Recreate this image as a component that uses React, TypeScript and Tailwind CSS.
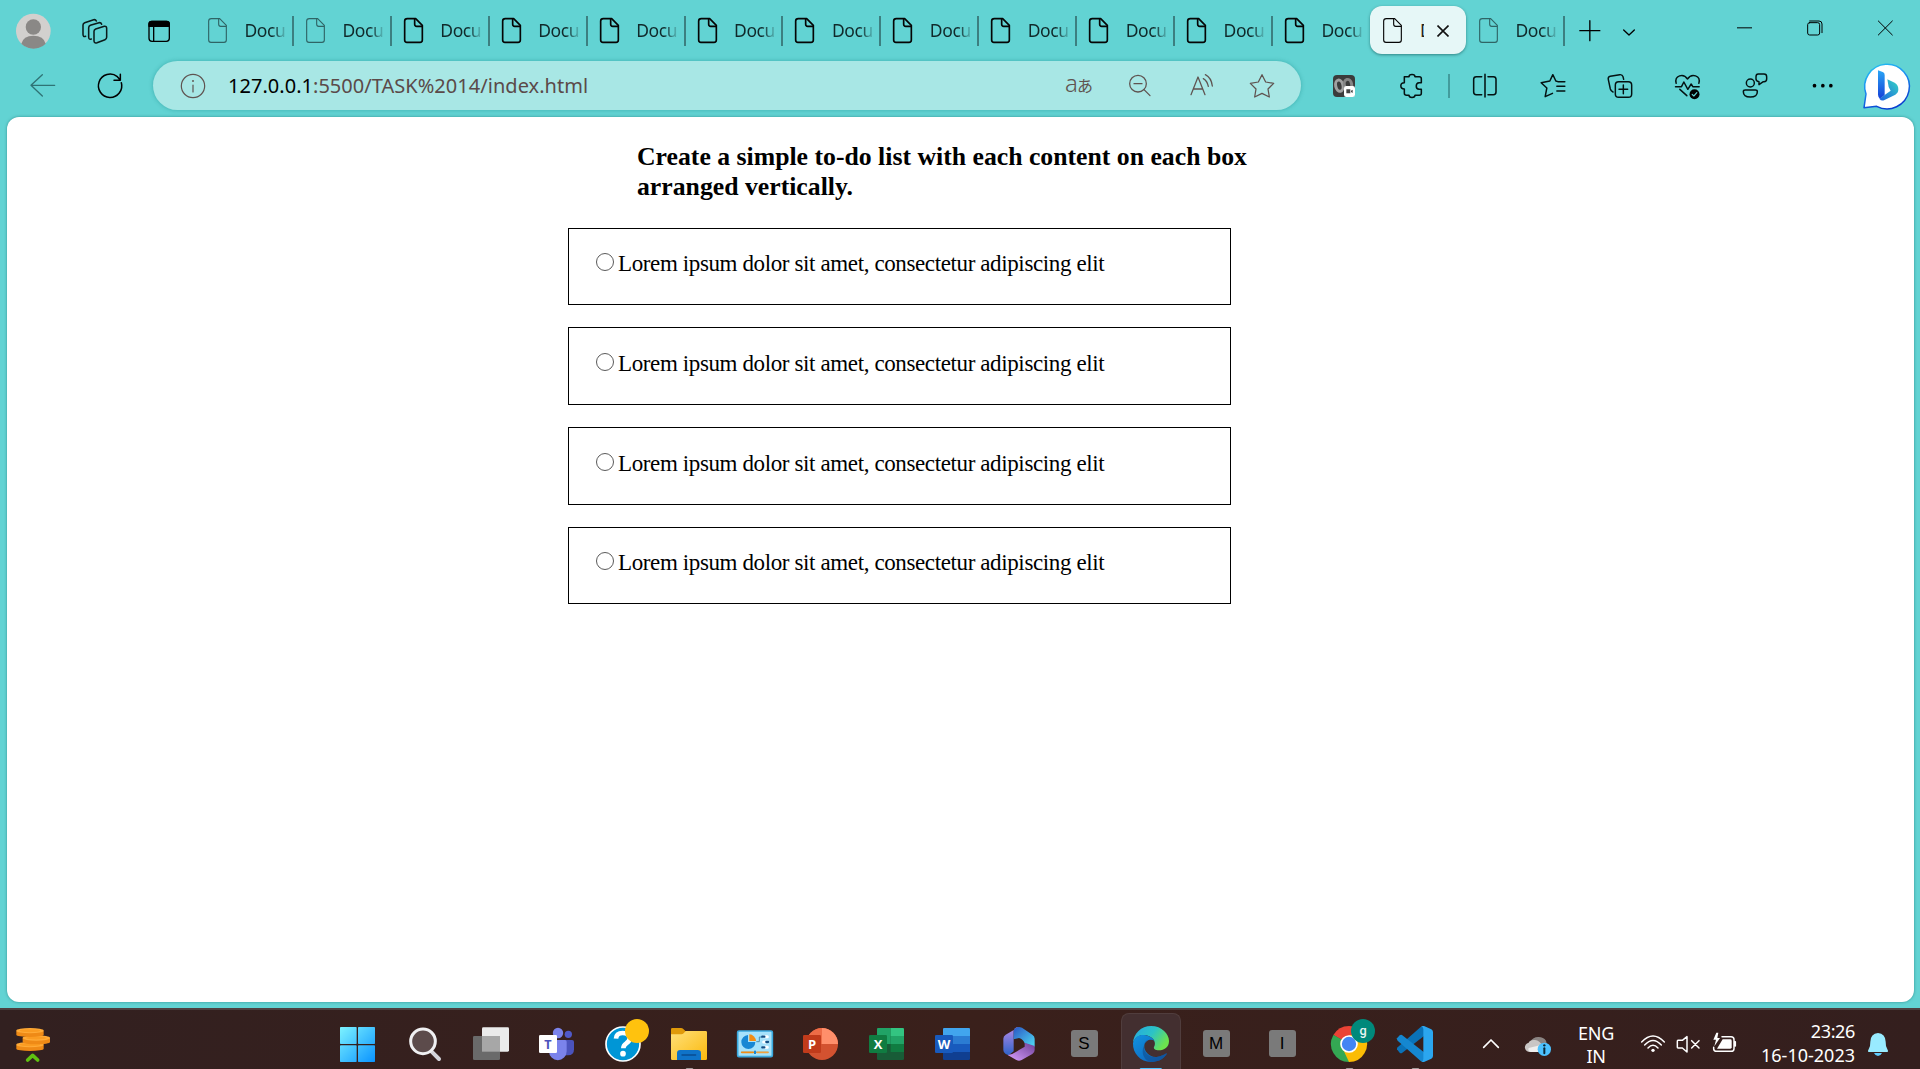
import React from "react";

const UI_FONT = "font-['Noto_Sans','Open_Sans',sans-serif]";

type ArtProps = {
  cx: number;
  cy: number;
  size?: number;
  stroke?: string;
  sw?: number;
  children: React.ReactNode;
};

/** Square drawing area with three user units per pixel, centred on (cx, cy). */
function Art({ cx, cy, size = 50, stroke = "none", sw = 4, children }: ArtProps) {
  const half = (size * 3) / 2;
  return (
    <svg
      width={size}
      height={size}
      viewBox={`${cx - half} ${cy - half} ${size * 3} ${size * 3}`}
      fill="none"
      stroke={stroke}
      strokeWidth={sw}
      strokeLinecap="round"
      strokeLinejoin="round"
      className="block shrink-0 overflow-visible"
    >
      {children}
    </svg>
  );
}

function Slot({ w, children }: { w: string; children?: React.ReactNode }) {
  return <div className={`flex h-full shrink-0 items-center justify-center ${w}`}>{children}</div>;
}

function PageIcon({ dim, thin }: { dim?: boolean; thin?: boolean }) {
  return (
    <svg width="19" height="25" viewBox="0 0 57 75" fill="none" stroke={dim ? "#2f6465" : "#050505"} strokeWidth={dim || thin ? 3.4 : 5} strokeLinejoin="round" className="block shrink-0 overflow-visible">
      <path d="M10 2H35L55 22V66Q55 73 48 73H9Q2 73 2 66V9Q2 2 10 2Z" />
      <path d="M32 2V19Q32 25 38 25H55" />
    </svg>
  );
}

function Tab({ dim, divider }: { dim?: boolean; divider: boolean }) {
  return (
    <div className="relative flex h-full w-[97.92px] shrink-0 items-center pl-3">
      <PageIcon dim={dim} />
      <span className="-mt-px ml-[17.5px] h-[28px] w-[43px] overflow-hidden whitespace-nowrap bg-gradient-to-r from-[#10292a] from-65% to-[#62d3d3] to-100% bg-clip-text text-[17.5px] leading-[28px] tracking-[-0.4px] text-transparent">
        Docu
      </span>
      {divider && <span className="ml-[4.5px] h-[30px] w-[2px] shrink-0 bg-[#3c7f80]" />}
    </div>
  );
}

function TabStrip() {
  return (
    <div className="flex h-[61px] w-full items-center">
      <Slot w="w-16">
        <Art cx={96} cy={91}>
          <circle cx="100" cy="91" r="52" fill="#d2d0ce" />
          <circle cx="100" cy="79" r="23" fill="#8a8886" />
          <path d="M64 129Q70 105 100 105Q131 105 137 129A52 52 0 0 1 64 129Z" fill="#8a8886" />
        </Art>
      </Slot>
      <Slot w="w-16">
        <Art cx={288} cy={91} stroke="#0b1b1b" sw={4.6}>
          <path d="M287 85L313 77Q320 76 320 83V110Q320 115 315 117L291 126Q282 129 282 120V92Q282 87 287 85Z" />
          <path d="M274 115Q266 118 266 109V81Q266 76 271 74L297 66Q303 65 305 71" />
          <path d="M257 107Q249 110 249 101V73Q249 68 254 66L281 57Q287 56 289 61" />
        </Art>
      </Slot>
      <Slot w="w-[68px]">
        <Art cx={486} cy={91} stroke="#000" sw={4}>
          <rect x="447" y="62" width="61" height="60" rx="9" />
          <path d="M447 77V70Q447 62 455 62H500Q508 62 508 70V77Z" fill="#000" />
          <path d="M461 77V121" />
        </Art>
      </Slot>
      {Array.from({ length: 12 }, (_, i) => (
        <Tab key={i} dim={i < 2} divider={i < 11} />
      ))}
      <div className="-ml-px mr-px mt-[-1px] flex h-12 w-24 shrink-0 items-center rounded-xl bg-[#e6f7f7] pl-[13px] pt-px shadow-[0_1px_3px_rgba(0,60,60,0.5)]">
        <PageIcon thin />
        <span className="-mt-px ml-[18px] w-[4px] overflow-hidden text-[17.5px] leading-7 text-[#222]">D</span>
        <span className="ml-[13px] mt-px flex">
          <svg width="12" height="12" viewBox="0 0 12 12" stroke="#111" strokeWidth="1.6">
            <path d="M0.5 0.5L11.5 11.5M11.5 0.5L0.5 11.5" />
          </svg>
        </span>
      </div>
      <Tab dim divider />
      <Slot w="w-[46px]">
        <Art cx={445.5} cy={91} stroke="#000">
          <path d="M421 90H481M451 60V120" />
        </Art>
      </Slot>
      <Slot w="w-[32px]">
        <Art cx={563} cy={91} size={30} stroke="#000">
          <path d="M553 88L569 103L585 88" />
        </Art>
      </Slot>
      <div className="ml-auto flex h-full">
        <Slot w="w-[70px]">
          <Art cx={915} cy={92} stroke="#000" sw={3}>
            <path d="M891 82.5H936" strokeLinecap="butt" />
          </Art>
        </Slot>
        <Slot w="w-[70px]">
          <Art cx={1125} cy={92} stroke="#000" sw={3}>
            <rect x="1103" y="67" width="36" height="37" rx="6" />
            <path d="M1109 62H1137Q1146 62 1146 71V97" />
          </Art>
        </Slot>
        <Slot w="w-[70px]">
          <Art cx={1335} cy={92} stroke="#000" sw={3}>
            <path d="M1315 62L1357 104M1357 62L1315 104" />
          </Art>
        </Slot>
      </div>
    </div>
  );
}

function AddressBar() {
  const c = "#5f5350";
  return (
    <div className="flex h-[49px] w-[1148px] shrink-0 items-center rounded-full bg-[#a8e7e5] pr-[8.5px] shadow-[0_0_4px_rgba(20,130,130,0.45)]">
      <Slot w="w-[75px]">
        <Art cx={573} cy={257} stroke={c} sw={3.6}>
          <circle cx="579" cy="257" r="35" />
          <path d="M579 254V275" />
          <circle cx="579" cy="242" r="1.2" />
        </Art>
      </Slot>
      <span className="whitespace-nowrap text-[20px] leading-[49px] tracking-[0.03px] text-[#5b4a49]">
        <span className="text-black">127.0.0.1</span>:5500/TASK%2014/index.html
      </span>
      <div className="ml-auto flex h-full">
        <Slot w="w-[61px]">
          <span className="mb-[3px] flex items-baseline text-[#5f5350]">
            <span className="text-[24px] font-light leading-6">a</span>
            <span className="-ml-px font-['Noto_Sans_CJK_JP',sans-serif] text-[16px] leading-6">あ</span>
          </span>
        </Slot>
        <Slot w="w-[61px]">
          <Art cx={540} cy={257} stroke={c} sw={3.8}>
            <circle cx="534" cy="250" r="25" />
            <path d="M522 250H546M552 268L570 286" />
          </Art>
        </Slot>
        <Slot w="w-[61px]">
          <Art cx={723} cy={257} stroke={c} sw={3.8}>
            <path d="M693 283L714 230L735 283M700 266H728M730 235Q742 242 745 258M736 223Q754 232 757 257" />
          </Art>
        </Slot>
        <Slot w="w-[61px]">
          <Art cx={906} cy={257} stroke={c} sw={3.8}>
            <path d="M906 223L917 245L941 249L924 266L928 290L906 279L884 290L888 266L871 249L895 245Z" />
          </Art>
        </Slot>
      </div>
    </div>
  );
}

function Toolbar() {
  const k = "#041212";
  return (
    <div className="flex h-[49px] w-full items-center">
      <Slot w="w-[86px]">
        <Art cx={129} cy={257} stroke="#2f7375">
          <path d="M164 255H93M127 223L93 255L127 287" />
        </Art>
      </Slot>
      <Slot w="w-12">
        <Art cx={330} cy={257} stroke="#000" sw={4.6}>
          <path d="M364 247A35 35 0 1 1 352 229L361 239M361 222V240H342" />
        </Art>
      </Slot>
      <div className="w-[19px] shrink-0" />
      <AddressBar />
      <div className="w-[9.5px] shrink-0" />
      <Slot w="w-[67px]">
        <Art cx={1152} cy={258}>
          <rect x="1119" y="225" width="66" height="66" rx="12" fill="#3b3b3b" />
          <ellipse cx="1138" cy="257" rx="11" ry="17" stroke="#a0a0a0" strokeWidth="9" transform="rotate(-12 1138 257)" />
          <ellipse cx="1164" cy="254" rx="11" ry="16" stroke="#858585" strokeWidth="9" transform="rotate(-12 1164 254)" />
          <rect x="1152" y="258" width="33" height="33" rx="7" fill="#fff" />
          <path d="M1159 268H1171V280H1159ZM1173 272L1178 269V279L1173 276Z" fill="#444" />
        </Art>
      </Slot>
      <Slot w="w-[67px]">
        <Art cx={1353} cy={258} stroke={k} sw={4.6}>
          <path d="M1333 230H1347C1347 221 1365 221 1365 230H1378Q1384 230 1384 236V248H1377C1366 249 1366 267 1377 268H1384V280Q1384 286 1378 286H1365C1365 295 1347 295 1347 286H1340Q1333 286 1333 280V267C1319 267 1319 248 1333 248V236Z" />
        </Art>
      </Slot>
      <Slot w="w-[6.75px]">
        <span className="ml-[3px] h-6 w-[2px] bg-[#429c9d]" />
      </Slot>
      <Slot w="w-[67.5px]">
        <Art cx={135} cy={258} stroke={k} sw={4.6}>
          <path d="M125 230H109Q101 230 101 238V276Q101 284 109 284H125M144 230H160Q168 230 168 238V276Q168 284 160 284H144M135 223V291" />
        </Art>
      </Slot>
      <Slot w="w-[67.5px]">
        <Art cx={338.5} cy={258} stroke={k} sw={4.4}>
          <path d="M374 245H353L347 243L338 224L329 243L303 248L320 264L315 290L337 280M350 259H374M350 273H374" />
        </Art>
      </Slot>
      <Slot w="w-[67.5px]">
        <Art cx={541} cy={258} stroke={k} sw={4.4}>
          <rect x="527" y="245" width="49" height="47" rx="10" />
          <path d="M551 255V281M538 268H564M552 238L550 230Q548 223 540 224L512 229Q504 231 506 239L512 267Q514 274 520 276" />
        </Art>
      </Slot>
      <Slot w="w-[67.5px]">
        <Art cx={743.5} cy={258} stroke={k} sw={4.4}>
          <path d="M708 250C702 226 730 219 742 237C754 219 783 226 776 250M706 260H724L731 246L743 268L753 252L758 260H777M719 268L740 287" />
          <circle cx="763" cy="283" r="15" fill="#000" stroke="none" />
          <path d="M756 283L761 288L770 278" stroke="#62d3d3" strokeWidth="3.5" />
        </Art>
      </Slot>
      <Slot w="w-[67.5px]">
        <Art cx={945} cy={258} stroke={k} sw={4.4}>
          <circle cx="931" cy="249" r="12" />
          <path d="M916 270H946Q952 270 952 275C952 286 942 291 931 291C920 291 910 286 910 275Q910 270 916 270ZM955 222H972Q980 222 980 230V237Q980 245 972 245H970L957 254V245Q948 244 948 237V230Q948 222 955 222Z" />
        </Art>
      </Slot>
      <Slot w="w-[67.5px]">
        <Art cx={1147.5} cy={258}>
          <g fill="#000">
            <circle cx="1122" cy="257" r="5.5" />
            <circle cx="1147" cy="257" r="5.5" />
            <circle cx="1171" cy="257" r="5.5" />
          </g>
        </Art>
      </Slot>
      <Slot w="w-[61.5px]">
        <Art cx={1343} cy={259}>
          <defs>
            <linearGradient id="bing-ring" x1="0" y1="0" x2="0.4" y2="1">
              <stop offset="0" stopColor="#27c8f0" />
              <stop offset="0.5" stopColor="#1a8ff2" />
              <stop offset="1" stopColor="#0a3fd0" />
            </linearGradient>
            <linearGradient id="bing-stem" x1="0" y1="0" x2="0" y2="1">
              <stop offset="0" stopColor="#2aa5f5" />
              <stop offset="1" stopColor="#1540d8" />
            </linearGradient>
            <linearGradient id="bing-bowl" x1="0" y1="1" x2="1" y2="0">
              <stop offset="0" stopColor="#1b5fe0" />
              <stop offset="1" stopColor="#35d6c4" />
            </linearGradient>
          </defs>
          <path d="M1274 324L1280 283A67 67 0 1 1 1312 320Q1292 322 1274 324Z" fill="#fff" stroke="url(#bing-ring)" strokeWidth="4.5" />
          <path d="M1316 212L1330 217Q1336 219 1336 226V286L1322 297Q1316 292 1316 285Z" fill="url(#bing-stem)" />
          <path d="M1344 239L1366 249Q1377 255 1377 269Q1377 280 1368 285L1334 302Q1326 305 1320 297L1354 273L1348 262Z" fill="url(#bing-bowl)" />
        </Art>
      </Slot>
    </div>
  );
}

function TodoItem({ text, tall }: { text: string; tall: boolean }) {
  return (
    <li className={`mb-[22px] flex w-[663px] items-start border border-black pl-[27px] ${tall ? "h-[78px] pt-[23px]" : "h-[77px] pt-[22px]"}`}>
      <span className="mt-[2px] h-[18px] w-[18px] shrink-0 rounded-full border border-[#5a5a5a] bg-white" />
      <span className="ml-[4px] whitespace-nowrap text-[23px] leading-[26px] tracking-[-0.38px] text-black">{text}</span>
    </li>
  );
}

function PageContent() {
  return (
    <main className="mx-[7px] mr-[6px] mt-[7px] h-[885px] overflow-hidden rounded-xl bg-white font-['Liberation_Serif',serif] shadow-[0_0_3px_rgba(0,80,80,0.5)]">
      <h3 className="ml-[630px] mt-[25px] w-[620px] whitespace-nowrap text-[25.74px] font-bold leading-[30px] text-black">
        Create a simple to-do list with each content on each box
        <br />
        arranged vertically.
      </h3>
      <ul className="ml-[561px] mt-[26px]">
        {[false, true, true, false].map((tall, i) => (
          <TodoItem key={i} tall={tall} text="Lorem ipsum dolor sit amet, consectetur adipiscing elit" />
        ))}
      </ul>
    </main>
  );
}

function TileLetter({ children }: { children: string }) {
  return (
    <span className="mb-[2px] flex h-[27px] w-[27px] translate-x-[1px] items-center justify-center rounded-[3px] bg-[#7a7a7a] font-['Liberation_Sans',sans-serif] text-[17px] leading-none text-black">
      {children}
    </span>
  );
}

function AppSlot({ children }: { children: React.ReactNode }) {
  return <div className="flex h-[50px] w-[66px] shrink-0 items-center justify-center">{children}</div>;
}

function OfficeBadge({ x, fill, letter }: { x: number; fill: string; letter: string }) {
  return (
    <g stroke="none">
      <rect x={x} y="135" width="54" height="54" rx="4" fill={fill} />
      <text x={x + 27} y="176" textAnchor="middle" fontSize="39" fontWeight="700" fontFamily="Open Sans, sans-serif" fill="#fff">
        {letter}
      </text>
    </g>
  );
}

function TaskbarApps() {
  return (
    <div className="flex shrink-0 items-end">
      <AppSlot>
        <Art cx={1071} cy={162}>
          <defs>
            <linearGradient id="win" gradientUnits="userSpaceOnUse" x1="1020" y1="111" x2="1125" y2="216">
              <stop offset="0" stopColor="#7df3ff" />
              <stop offset="1" stopColor="#0a93ff" />
            </linearGradient>
          </defs>
          <g fill="url(#win)">
            <rect x="1020" y="111" width="50" height="51" rx="2" />
            <rect x="1074" y="111" width="51" height="51" rx="2" />
            <rect x="1020" y="166" width="50" height="50" rx="2" />
            <rect x="1074" y="166" width="51" height="50" rx="2" />
          </g>
        </Art>
      </AppSlot>
      <AppSlot>
        <Art cx={1269} cy={162}>
          <path d="M1295 185L1317 207" stroke="#d5d5dc" strokeWidth="12" />
          <circle cx="1269" cy="154" r="37" fill="#5c4b4b" stroke="#f0f0f2" strokeWidth="9" />
        </Art>
      </AppSlot>
      <AppSlot>
        <Art cx={27} cy={162}>
          <rect x="6" y="112" width="81" height="73" rx="4" fill="#ebebeb" />
          <rect x="-21" y="138" width="81" height="72" rx="4" fill="#6a6a6a" />
          <rect x="6" y="138" width="54" height="47" fill="#a7a7a7" />
        </Art>
      </AppSlot>
      <AppSlot>
        <Art cx={225} cy={162}>
          <circle cx="265" cy="133" r="11" fill="#5059c9" />
          <path d="M250 150H276Q282 150 282 156V178Q282 196 264 196H250Z" fill="#4b53bc" />
          <circle cx="234" cy="129" r="15.5" fill="#7b83eb" />
          <path d="M207 150H255Q260 150 260 155V184A26 26 0 0 1 207 184Z" fill="#7b83eb" />
          <rect x="177" y="135" width="54" height="54" rx="4" fill="#fff" />
          <text x="204" y="176" textAnchor="middle" fontSize="38" fontWeight="700" fontFamily="Open Sans, sans-serif" fill="#4b53bc">T</text>
        </Art>
      </AppSlot>
      <AppSlot>
        <Art cx={423} cy={162}>
          <circle cx="429" cy="162" r="51" fill="#0096d6" stroke="#fff" strokeWidth="5" />
          <path d="M408 146Q409 129 428 129Q449 129 449 145Q449 154 439 160Q430 166 430 175" stroke="#fff" strokeWidth="14" strokeLinecap="butt" />
          <circle cx="429" cy="191" r="8.5" fill="#fff" />
          <circle cx="471" cy="123" r="36" fill="#ffc20e" />
        </Art>
      </AppSlot>
      <AppSlot>
        <Art cx={621} cy={162}>
          <defs>
            <linearGradient id="folder" x1="0" y1="0" x2="1" y2="1">
              <stop offset="0" stopColor="#ffe07a" />
              <stop offset="1" stopColor="#fbb90c" />
            </linearGradient>
          </defs>
          <path d="M573 118Q573 114 577 114H603Q607 114 610 117L620 127V145H573Z" fill="#e09a0a" />
          <path d="M573 133H604Q608 133 611 130L617 123H677Q681 123 681 127V206Q681 210 677 210H577Q573 210 573 206Z" fill="url(#folder)" />
          <path d="M591 210V190Q591 180 601 180H653Q663 180 663 190V210Z" fill="#0f73c8" />
          <path d="M606 195H647" stroke="#0a4c90" strokeWidth="4" />
          <rect x="617" y="234" width="23" height="8" rx="4" fill="#a39a99" />
        </Art>
      </AppSlot>
      <AppSlot>
        <Art cx={819} cy={162}>
          <rect x="773" y="123" width="104" height="77" rx="4" fill="#a6e2fb" stroke="#3aa9df" strokeWidth="5" />
          <path d="M804 135A21 21 0 1 0 826 156H804Z" fill="#1787d4" />
          <path d="M808 133A21 21 0 0 1 828 153H808Z" fill="#f28c13" />
          <path d="M830 155H838V141H846M785 187H864" stroke="#4d8fae" strokeWidth="3" />
          <path d="M785 187H820" stroke="#f28c13" strokeWidth="5" />
          <path d="M831 187H864" stroke="#f2a13c" strokeWidth="5" />
          <rect x="822" y="182" width="6" height="10" fill="#1787d4" />
          <path d="M851 140H862M851 156H862M851 172H862" stroke="#fff" strokeWidth="9" />
          <path d="M847 140H853M859 156H864M847 172H853" stroke="#124f85" strokeWidth="7" />
        </Art>
      </AppSlot>
      <AppSlot>
        <Art cx={1017} cy={162}>
          <circle cx="1026" cy="162" r="48" fill="#d35230" />
          <path d="M1026 114A48 48 0 0 1 1074 162H1026Z" fill="#ff8f6b" />
          <path d="M978 162A48 48 0 0 1 1026 114V162Z" fill="#ed6c47" />
          <OfficeBadge x={969} fill="#c13b1b" letter="P" />
        </Art>
      </AppSlot>
      <AppSlot>
        <Art cx={1215} cy={162}>
          <rect x="1191" y="114" width="81" height="96" rx="4" fill="#185c37" />
          <path d="M1191 118Q1191 114 1195 114H1232V162H1191Z" fill="#21a366" />
          <path d="M1232 114H1268Q1272 114 1272 118V138H1232Z" fill="#33c481" />
          <rect x="1232" y="138" width="40" height="24" fill="#21a366" />
          <rect x="1232" y="162" width="40" height="24" fill="#107c41" />
          <OfficeBadge x={1167} fill="#107c41" letter="X" />
        </Art>
      </AppSlot>
      <AppSlot>
        <Art cx={1413} cy={162}>
          <rect x="1389" y="114" width="81" height="96" rx="4" fill="#103f91" />
          <path d="M1389 118Q1389 114 1393 114H1466Q1470 114 1470 118V138H1389Z" fill="#41a5ee" />
          <rect x="1389" y="138" width="81" height="24" fill="#2b7cd3" />
          <rect x="1389" y="162" width="81" height="24" fill="#185abd" />
          <OfficeBadge x={1365} fill="#185abd" letter="W" />
        </Art>
      </AppSlot>
      <AppSlot>
        <Art cx={171} cy={162}>
          <defs>
            <linearGradient id="m-left" x1="0" y1="0" x2="0" y2="1">
              <stop offset="0" stopColor="#b58ae8" />
              <stop offset="1" stopColor="#2d63c8" />
            </linearGradient>
            <linearGradient id="m-right" x1="0" y1="0" x2="1" y2="1">
              <stop offset="0" stopColor="#2a55c4" />
              <stop offset="1" stopColor="#4fdcf5" />
            </linearGradient>
            <linearGradient id="m-foot" x1="0" y1="1" x2="1" y2="0">
              <stop offset="0" stopColor="#d9a0ff" />
              <stop offset="1" stopColor="#6d3f97" />
            </linearGradient>
          </defs>
          <path d="M177 111L137 134Q130 138 130 146V180Q130 188 137 192L146 196L161 184V122Q163 112 177 111Z" fill="url(#m-left)" />
          <path d="M177 111Q161 113 161 125V148L177 144Q190 148 194 160L224 170V146Q224 138 217 134L186 113Q181 111 177 111Z" fill="url(#m-right)" />
          <path d="M224 168V180Q224 188 217 192L185 210Q177 214 169 210L143 195Q160 193 177 180L194 170V158Z" fill="url(#m-foot)" />
        </Art>
      </AppSlot>
      <AppSlot><TileLetter>S</TileLetter></AppSlot>
      <AppSlot>
        <div className="relative flex items-center justify-center">
          <span className="absolute -top-[6px] left-[-4px] h-[56px] w-[60px] translate-x-[1px] rounded-t-lg border border-b-0 border-[#503d3d] bg-[#432f30]" />
          <span className="relative">
            <Art cx={567} cy={162}>
              <defs>
                <linearGradient id="edge-top" x1="0" y1="0" x2="1" y2="0.5">
                  <stop offset="0" stopColor="#25a7e2" />
                  <stop offset="0.55" stopColor="#2cc3c6" />
                  <stop offset="1" stopColor="#6ce34e" />
                </linearGradient>
                <linearGradient id="edge-low" x1="0" y1="0" x2="1" y2="1">
                  <stop offset="0" stopColor="#1193e0" />
                  <stop offset="1" stopColor="#0d5cb5" />
                </linearGradient>
              </defs>
              <path d="M519 160C520 130 544 108 573 108C606 108 627 132 627 153C627 172 612 181 597 181C585 181 580 176 582 171C592 155 575 134 549 135C534 136 523 145 519 160Z" fill="url(#edge-top)" />
              <path d="M519 160C523 140 538 134 552 135C568 136 580 146 584 152C572 145 556 150 553 166C550 185 570 203 590 201C604 199 614 193 619 190C621 191 620 193 618 195C607 210 590 216 573 216C541 216 518 190 519 160Z" fill="url(#edge-low)" />
              <path d="M562 149C546 160 547 190 575 200C594 205 612 194 619 190C621 191 620 193 618 195C607 210 590 216 573 216C548 210 538 180 562 149Z" fill="#114a8b" opacity="0.55" />
              <rect x="539" y="234" width="67" height="8" rx="4" fill="#4cc2ff" />
            </Art>
          </span>
        </div>
      </AppSlot>
      <AppSlot><TileLetter>M</TileLetter></AppSlot>
      <AppSlot><TileLetter>I</TileLetter></AppSlot>
      <AppSlot>
        <Art cx={1161} cy={162}>
          <path d="M1167 162L1120.200 135A54 54 0 0 1 1213.800 135Z" fill="#ea4335" />
          <path d="M1167 162L1213.800 135A54 54 0 0 1 1167 216Z" fill="#fbbc05" />
          <path d="M1167 162L1167 216A54 54 0 0 1 1120.200 135Z" fill="#34a853" />
          <path d="M1167 135H1213.800L1192 180Z" fill="#fbbc05" />
          <path d="M1120.200 135L1144 175L1167 162Z" fill="#34a853" />
          <path d="M1192 175L1167 216L1150 180Z" fill="#fbbc05" />
          <circle cx="1167" cy="162" r="24" fill="#4285f4" stroke="#fff" strokeWidth="5" />
          <circle cx="1209" cy="123" r="36" fill="#00897b" />
          <text x="1209" y="134" textAnchor="middle" fontSize="38" fontFamily="Roboto, sans-serif" fontWeight="500" fill="#e8f5f3">g</text>
          <rect x="1157" y="234" width="23" height="8" rx="4" fill="#a39a99" />
        </Art>
      </AppSlot>
      <AppSlot>
        <Art cx={1359} cy={162}>
          <path d="M1311 178Q1310 175 1313 172L1382 111L1392 108V138L1326 189Q1322 191 1319 188Z" fill="#0a72b8" />
          <path d="M1311 145Q1310 149 1313 152L1382 213L1392 216V187L1326 135Q1322 133 1319 136Z" fill="#1587d0" />
          <path d="M1392 108L1414 118Q1419 121 1419 126V198Q1419 203 1414 206L1392 216Q1386 217 1382 213Q1390 216 1390 206V118Q1390 108 1382 111Q1386 107 1392 108Z" fill="#2ba6ef" />
          <rect x="1355" y="234" width="23" height="8" rx="4" fill="#a39a99" />
        </Art>
      </AppSlot>
    </div>
  );
}

function Coins() {
  return (
    <Art cx={99} cy={162}>
      {[
        [49, 156],
        [68, 136],
        [49, 114],
      ].map(([x, y]) => (
        <g key={y}>
          <path d={`M${x} ${y + 8}V${y + 20}A41 7 0 0 0 ${x + 82} ${y + 20}V${y + 8}Z`} fill="#ef8a16" />
          <ellipse cx={x + 41} cy={y + 8} rx="41" ry="8" fill="#ffab38" />
          <ellipse cx={x + 41} cy={y + 8} rx="31" ry="4.500" fill="#fb9c22" />
        </g>
      ))}
      <path d="M83 210L98 196L113 210" stroke="#5fc211" strokeWidth="11" />
    </Art>
  );
}

function Tray() {
  return (
    <div className="ml-auto flex shrink-0 items-center">
      <div className="flex h-[50px] w-[50px] items-center justify-center">
        <Art cx={153} cy={162} stroke="#fff" sw={5}>
          <path d="M131 172L153 150L175 172" />
        </Art>
      </div>
      <div className="flex h-[50px] w-[46px] items-center justify-center">
        <Art cx={297} cy={162} size={46}>
          <path d="M272 154A26 22 0 0 1 318 152L322 168H290Z" fill="#8a8482" />
          <path d="M272 186A14 14 0 0 1 266 158Q270 148 285 150Q300 152 306 166L296 186Z" fill="#c9c6c5" />
          <path d="M272 186Q262 182 266 174L300 166L296 186Z" fill="#efefef" />
          <circle cx="313" cy="178" r="20" fill="#4cc2ff" />
          <path d="M313 175V190" stroke="#0b2a3a" strokeWidth="6" />
          <circle cx="313" cy="166" r="3.500" fill="#0b2a3a" />
        </Art>
      </div>
      <div className="mr-[5px] flex h-[50px] w-[68px] flex-col items-center text-[18px] leading-[23px] tracking-[-0.3px] text-white">
        <span className="mt-[3px]">ENG</span>
        <span>IN</span>
      </div>
      <div className="flex h-[50px] w-9 items-center justify-center">
        <Art cx={639} cy={162} size={36} stroke="#fff" sw={4.5}>
          <path d="M605 156Q639 120 673 156M614 165Q639 138 664 165M624 174Q639 158 654 174" />
          <circle cx="639" cy="181" r="5" fill="#fff" stroke="none" />
        </Art>
      </div>
      <div className="flex h-[50px] w-9 items-center justify-center">
        <Art cx={747} cy={162} size={36} stroke="#fff" sw={4.5}>
          <path d="M741 140V186L727 174H714Q712 174 712 172V154Q712 151 714 151H727ZM755 152L777 174M777 152L755 174" />
        </Art>
      </div>
      <div className="flex h-[50px] w-9 items-center justify-center">
        <Art cx={855} cy={162} size={36} stroke="#fff" sw={4.5}>
          <path d="M846 140H873Q882 140 882 149V176Q882 184 873 184H830Q821 184 821 176V172M886 155V168" />
          <path d="M848 148H871Q875 148 875 152V172Q875 176 871 176H831Z" fill="#fff" stroke="none" />
          <path d="M829 128L820 149H828L823 169L840 144H832L835 128Z" fill="#fff" stroke="none" />
        </Art>
      </div>
      <div className="flex h-[50px] w-[112px] flex-col items-end whitespace-nowrap text-[18px] leading-6 text-white">
        <span className="tracking-[-0.35px]">23:26</span>
        <span>16-10-2023</span>
      </div>
      <div className="mr-[19px] flex h-[50px] w-[46px] items-center justify-center">
        <Art cx={1314} cy={162} size={46}>
          <path d="M1314 129Q1336 131 1337 155L1338 168L1344 182Q1345 186 1341 186H1287Q1283 186 1284 182L1290 168L1291 155Q1292 131 1314 129Z" fill="#99ebff" />
          <path d="M1302 189H1326Q1322 198 1314 198Q1306 198 1302 189Z" fill="#60cdff" />
        </Art>
      </div>
    </div>
  );
}

export default function App() {
  return (
    <div className={`flex h-[1069px] w-[1920px] flex-col overflow-hidden bg-[#62d3d3] ${UI_FONT}`}>
      <TabStrip />
      <Toolbar />
      <PageContent />
      <footer className="mt-[6px] flex h-[61px] w-full shrink-0 items-end border-t-2 border-[#4d4040] bg-gradient-to-r from-[#322020] via-[#3a201b] to-[#341f1e]">
        <div className="flex h-[50px] w-[66px] shrink-0 items-center justify-center">
          <Coins />
        </div>
        <div className="w-[258px] shrink-0" />
        <TaskbarApps />
        <Tray />
      </footer>
    </div>
  );
}
